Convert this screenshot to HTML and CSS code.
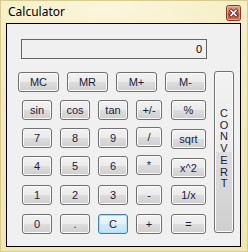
FILE: index.html
```html
<!DOCTYPE html>
<html lang="en">

<head>
    <meta charset="UTF-8">
    <meta name="viewport" content="width=device-width, initial-scale=1.0">
    <title>Calculator</title>
    <link rel="stylesheet" href="styles.css">
</head>

<body>
    <div class="window">
        <div class="titlebar">
            <span class="title">Calculator</span>
            <button class="close" aria-label="Close">
                <svg width="15" height="16" viewBox="0 0 15 16">
                    <defs>
                        <linearGradient id="red" x1="0" y1="0" x2="0" y2="1">
                            <stop offset="0" stop-color="#e9a898" />
                            <stop offset="0.45" stop-color="#d46a58" />
                            <stop offset="0.5" stop-color="#c2412e" />
                            <stop offset="1" stop-color="#d4745a" />
                        </linearGradient>
                    </defs>
                    <rect x="0.5" y="0.5" width="14" height="15" rx="2" fill="url(#red)" stroke="#7d3a2c" />
                    <rect x="1.5" y="1.5" width="12" height="13" rx="1" fill="none" stroke="#f0c0b0" stroke-opacity="0.6" />
                    <path d="M5 5.5 L10 10.5 M10 5.5 L5 10.5" stroke="#5a2a22" stroke-width="3.2" stroke-linecap="square" />
                    <path d="M5 5.5 L10 10.5 M10 5.5 L5 10.5" stroke="#ffffff" stroke-width="1.6" stroke-linecap="square" />
                </svg>
            </button>
        </div>

        <div class="client">
            <div class="display">0</div>

            <div class="pad">
                <div class="keys">
                    <div class="memory">
                        <button class="btn mem">MC</button>
                        <button class="btn mem">MR</button>
                        <button class="btn mem">M+</button>
                        <button class="btn mem">M-</button>
                    </div>

                    <div class="grid">
                        <button class="btn num">sin</button>
                        <button class="btn num">cos</button>
                        <button class="btn num">tan</button>
                        <button class="btn op">+/-</button>
                        <button class="btn fn">%</button>

                        <button class="btn num">7</button>
                        <button class="btn num">8</button>
                        <button class="btn num">9</button>
                        <button class="btn op up">/</button>
                        <button class="btn fn down1">sqrt</button>

                        <button class="btn num">4</button>
                        <button class="btn num">5</button>
                        <button class="btn num">6</button>
                        <button class="btn op up">*</button>
                        <button class="btn fn down2">x^2</button>

                        <button class="btn num">1</button>
                        <button class="btn num">2</button>
                        <button class="btn num">3</button>
                        <button class="btn op">-</button>
                        <button class="btn fn">1/x</button>

                        <button class="btn num">0</button>
                        <button class="btn num">.</button>
                        <button class="btn num focused">C</button>
                        <button class="btn op">+</button>
                        <button class="btn fn">=</button>
                    </div>
                </div>

                <button class="btn convert">C<br>O<br>N<br>V<br>E<br>R<br>T</button>
            </div>
        </div>
    </div>
</body>

</html>
```

FILE: styles.css
```css
body {
    margin: 0;
    background: #f3e9b5;
}

.window {
    width: 248px;
    height: 252px;
    box-sizing: border-box;
    border: 1px solid #d6cb93;
    background: radial-gradient(ellipse 140px 40px at 110px 8px, #fbf6dc, rgba(251, 246, 220, 0)),
        linear-gradient(#f6eec6, #f1e6ad);
}

.titlebar {
    display: flex;
    justify-content: space-between;
    height: 22px;
}

.title {
    font-family: "Noto Sans", sans-serif;
    font-size: 12px;
    line-height: 16px;
    color: #000;
    margin: 3px 0 0 7px;
}

.close {
    margin: 4px 6px 0 0;
    padding: 0;
    border: none;
    background: none;
    width: 15px;
    height: 16px;
    display: block;
}

.close svg {
    display: block;
}

.client {
    margin-left: 5px;
    width: 235px;
    height: 224px;
    box-sizing: border-box;
    border: 1px solid #000;
    background: #f0f0f0;
    padding: 15px 0 0 14px;
    font-family: "Liberation Sans", Arial, sans-serif;
    font-size: 11px;
}

.display {
    width: 186px;
    height: 20px;
    box-sizing: border-box;
    border: 1px solid #646464;
    text-align: right;
    padding-right: 4px;
    line-height: 18px;
    color: #000;
}

.pad {
    display: flex;
    gap: 8px;
    margin: 12px 0 0 -3px;
}

.keys {
    padding-top: 1px;
}

.memory {
    display: flex;
    gap: 8px;
}

.grid {
    display: grid;
    grid-template-columns: 38px 38px 38px 35px 35px;
    grid-template-rows: 28px 28px 29px 29px 20px;
    align-items: start;
    margin: 8px 0 0 4px;
}

.btn {
    box-sizing: border-box;
    height: 20px;
    padding: 0;
    border: 1px solid #707070;
    border-radius: 3px;
    background: linear-gradient(#f2f2f2 0%, #ebebeb 50%, #dddddd 50%, #cfcfcf 100%);
    box-shadow: inset 0 0 0 1px #fbfbfb;
    font-family: "Liberation Sans", Arial, sans-serif;
    font-size: 11px;
    color: #1a1a40;
    display: flex;
    align-items: center;
    justify-content: center;
}

.mem {
    width: 41px;
}

.num {
    width: 30px;
}

.op {
    width: 26px;
}

.fn {
    width: 35px;
}

.up {
    margin-top: -1px;
}

.down1 {
    margin-top: 1px;
}

.down2 {
    margin-top: 2px;
}

.focused {
    border-color: #3c7fb1;
    box-shadow: inset 0 0 0 1px #a6e2f8;
    background: linear-gradient(#eef7fc 0%, #e3f1fa 50%, #d4e9f6 50%, #c6e0f1 100%);
}

.convert {
    width: 20px;
    height: 162px;
    line-height: 11.7px;
    padding-bottom: 6px;
}
```
